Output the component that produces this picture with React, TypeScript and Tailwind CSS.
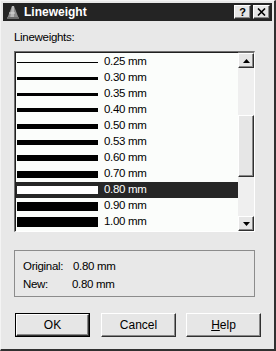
import React from "react";

const rows = [
  { label: "0.25 mm", t: 1 },
  { label: "0.30 mm", t: 3 },
  { label: "0.35 mm", t: 3 },
  { label: "0.40 mm", t: 4 },
  { label: "0.50 mm", t: 5 },
  { label: "0.53 mm", t: 5 },
  { label: "0.60 mm", t: 6 },
  { label: "0.70 mm", t: 7 },
  { label: "0.80 mm", t: 8, sel: true },
  { label: "0.90 mm", t: 9 },
  { label: "1.00 mm", t: 10 },
];

function Btn3D({ children, className = "" }: { children?: React.ReactNode; className?: string }) {
  return (
    <div
      className={
        "flex items-center justify-center bg-[#e6e6e6] border border-t-white border-l-white border-r-[#303030] border-b-[#303030] shadow-[inset_-1px_-1px_0_#888888] " +
        className
      }
    >
      {children}
    </div>
  );
}

export default function App() {
  return (
    <div
      className="w-[276px] h-[351px] bg-[#e8e8e8] border-r-2 border-b-2 border-r-[#303030] border-b-[#303030] border-l border-t border-l-[#f4f4f4] border-t-[#f4f4f4] overflow-hidden text-[11.5px] tracking-[-0.3px] text-black"
      style={{ fontFamily: '"Liberation Sans", Arial, sans-serif' }}
    >
      {/* title bar */}
      <div className="mt-[2px] mx-[2px] h-[18px] bg-[#242424] flex items-center">
        <svg width="16" height="16" viewBox="0 0 16 16" className="ml-[2px]">
          <path d="M2 15 L7 2 L9 2 L14 15 Z" fill="#8c8c8c" />
          <path d="M7 2 L9 2 L9 15 L5 15 Z" fill="#b8b8b8" />
          <path d="M2 15 L14 15 L14 13 L2 13 Z" fill="#6a6a6a" />
          <path d="M4 9 L10 9" stroke="#d8d8d8" strokeWidth="1" />
        </svg>
        <span className="ml-[3px] text-white font-bold text-[12px] tracking-normal leading-none">Lineweight</span>
        <div className="flex-1" />
        <Btn3D className="w-[17px] h-[14px] mr-[2px]">
          <span className="font-bold text-[11px] leading-none">?</span>
        </Btn3D>
        <Btn3D className="w-[17px] h-[14px] mr-[2px]">
          <svg width="9" height="8" viewBox="0 0 9 8">
            <path d="M1 0.5 L8 7.5 M8 0.5 L1 7.5" stroke="#000" strokeWidth="1.6" />
          </svg>
        </Btn3D>
      </div>

      <div className="pl-[13px]">
        <div className="mt-[10px] leading-[13px]">Lineweights:</div>

        {/* list box */}
        <div className="mt-[7px] w-[241px] h-[181px] border-t-2 border-l-2 border-t-[#707070] border-l-[#707070] border-r border-b border-r-white border-b-white flex">
          <div className="flex-1 bg-[#fbfdfb] pt-[1px] border-t border-l border-t-[#202020] border-l-[#202020] -mt-[1px] -ml-[1px]">
            {rows.map((r) => (
              <div
                key={r.label}
                className={
                  "h-[16px] flex items-center pl-[1px] " + (r.sel ? "bg-[#262626] text-white" : "")
                }
              >
                <div className="w-[81px] flex items-center">
                  <div
                    className={"w-full " + (r.sel ? "bg-white" : "bg-black")}
                    style={{ height: r.t }}
                  />
                </div>
                <span className="ml-[6px] leading-none">{r.label}</span>
              </div>
            ))}
          </div>
          {/* scrollbar */}
          <div className="w-[16px] flex flex-col bg-[#efefef]">
            <Btn3D className="h-[15px]">
              <svg width="7" height="4" viewBox="0 0 7 4">
                <path d="M0 4 L3.5 0 L7 4 Z" fill="#000" />
              </svg>
            </Btn3D>
            <div className="h-[47px]" />
            <Btn3D className="h-[62px]" />
            <div className="flex-1" />
            <Btn3D className="h-[15px]">
              <svg width="7" height="4" viewBox="0 0 7 4">
                <path d="M0 0 L3.5 4 L7 0 Z" fill="#000" />
              </svg>
            </Btn3D>
          </div>
        </div>

        {/* info group */}
        <div className="mt-[18px] w-[241px] h-[47px] border border-[#8c8c8c] pt-[9px] pl-[8px]">
          <div className="flex leading-[13px]">
            <span className="w-[50px]">Original:</span>
            <span>0.80 mm</span>
          </div>
          <div className="flex leading-[13px] mt-[5px]">
            <span className="w-[49px]">New:</span>
            <span>0.80 mm</span>
          </div>
        </div>

        {/* buttons */}
        <div className="mt-[16px] flex text-[12px] tracking-normal">
          <div className="ml-[1px] w-[75px] h-[24px] border border-black flex">
            <Btn3D className="flex-1">OK</Btn3D>
          </div>
          <Btn3D className="ml-[11px] w-[75px] h-[24px]">Cancel</Btn3D>
          <Btn3D className="ml-[10px] w-[75px] h-[24px]">
            <span>
              <span className="underline">H</span>elp
            </span>
          </Btn3D>
        </div>
      </div>
    </div>
  );
}
